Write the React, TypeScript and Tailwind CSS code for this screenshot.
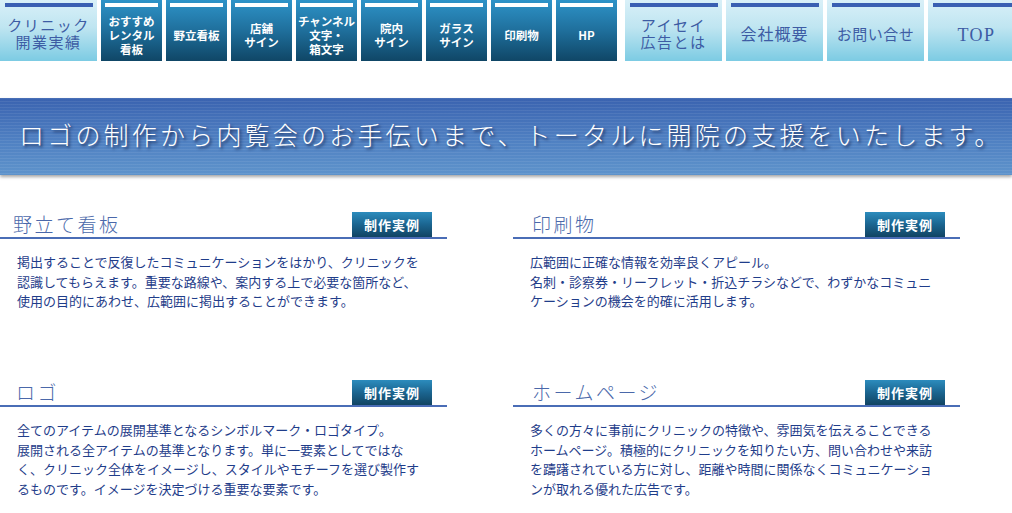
import React from "react";

const darkItems: string[][] = [
  ["おすすめ", "レンタル", "看板"],
  ["野立看板"],
  ["店舗", "サイン"],
  ["チャンネル", "文字・", "箱文字"],
  ["院内", "サイン"],
  ["ガラス", "サイン"],
  ["印刷物"],
  ["HP"],
];

const lightItems: { lines: string[]; size: string }[] = [
  { lines: ["アイセイ", "広告とは"], size: "text-[15px] leading-[17px] tracking-[1.5px]" },
  { lines: ["会社概要"], size: "text-[16px] leading-[18px] tracking-[1px]" },
  { lines: ["お問い合せ"], size: "text-[15px] leading-[18px] tracking-[0.5px]" },
  { lines: ["TOP"], size: "text-[18px] leading-[20px] tracking-[1.5px]" },
];

function LightItem({ lines, size }: { lines: string[]; size: string }) {
  return (
    <div className="relative h-[61px] w-[97px] shrink-0 bg-[linear-gradient(to_bottom,#d9f0f8_0%,#bfe5f1_45%,#7ccbe3_100%)]">
      <div className="absolute left-[5px] right-[4px] top-[3px] h-[4px] bg-[#3a5fb2]" />
      <div
        className={`flex h-full flex-col items-center justify-center pt-[9px] font-['Liberation_Serif','Noto_Sans_CJK_JP',serif] ${size} text-[#3d5ca4]`}
      >
        {lines.map((l) => (
          <span key={l} className="whitespace-nowrap">
            {l}
          </span>
        ))}
      </div>
    </div>
  );
}

function DarkItem({ lines }: { lines: string[] }) {
  return (
    <div className="relative h-[61px] w-[61px] shrink-0 bg-[linear-gradient(to_bottom,#2e93c8_0%,#1f6f9c_50%,#0f4666_100%)]">
      <div className="absolute left-[4px] right-[4px] top-[3px] h-[4px] bg-white" />
      <div className="flex h-full flex-col items-center justify-center pt-[8px] font-['Noto_Sans_CJK_JP',sans-serif] text-[11.5px] font-bold leading-[14px] text-white">
        {lines.map((l) => (
          <span key={l} className="whitespace-nowrap">
            {l}
          </span>
        ))}
      </div>
    </div>
  );
}

function Section({
  title,
  lines,
  titlePad,
}: {
  title: string;
  lines: string[];
  titlePad: string;
}) {
  return (
    <div className="h-[168px]">
      <div className="flex h-[28px] items-end justify-between border-b-2 border-[#4a6db6] pr-[15px]">
        <h2
          className={`${titlePad} pb-[2px] font-['Noto_Sans_CJK_JP',sans-serif] text-[19px] font-light leading-[22px] tracking-[2.5px] text-[#4a68aa]`}
        >
          {title}
        </h2>
        <div className="flex h-[25px] w-[80px] items-center justify-center bg-[linear-gradient(to_bottom,#2c8cbd_0%,#1b6590_50%,#114462_100%)] font-['Noto_Sans_CJK_JP',sans-serif] text-[13px] font-bold tracking-[1px] text-white">
          制作実例
        </div>
      </div>
      <div className="pl-[17px] pt-[13px] font-['Noto_Sans_CJK_JP',sans-serif] text-[13px] leading-[19.5px] text-[#1f3d8a]">
        {lines.map((l) => (
          <p key={l} className="whitespace-nowrap">
            {l}
          </p>
        ))}
      </div>
    </div>
  );
}

export default function App() {
  return (
    <div className="h-[513px] w-[1012px] overflow-hidden bg-white">
      {/* nav */}
      <nav className="flex h-[61px] items-start">
        <LightItem
          lines={["クリニック", "開業実績"]}
          size="text-[15px] leading-[17px] tracking-[1.5px]"
        />
        <div className="ml-[4px] flex gap-[4px]">
          {darkItems.map((lines) => (
            <DarkItem key={lines.join()} lines={lines} />
          ))}
        </div>
        <div className="ml-[8px] flex gap-[4px]">
          {lightItems.map((it) => (
            <LightItem key={it.lines.join()} lines={it.lines} size={it.size} />
          ))}
        </div>
      </nav>

      {/* banner */}
      <div className="mt-[37px] shadow-[0_2px_3px_rgba(0,0,0,0.35)]">
        <div className="relative h-[77px] bg-[linear-gradient(to_bottom,#3a63b0_0%,#4f80c2_55%,#5e93cb_100%)]">
          <div className="absolute inset-0 bg-[repeating-linear-gradient(to_bottom,rgba(255,255,255,0.07)_0px,rgba(255,255,255,0.07)_1px,transparent_1px,transparent_3px)]" />
          <div className="relative flex h-full items-center pl-[19px] pb-[4px] font-['Noto_Sans_CJK_JP',sans-serif] text-[25px] font-light tracking-[3.2px] whitespace-nowrap text-white [text-shadow:2px_2px_3px_rgba(10,20,60,0.75)]">
            ロゴの制作から内覧会のお手伝いまで、トータルに開院の支援をいたします。
          </div>
        </div>
      </div>

      {/* content */}
      <div className="mt-[36px] flex">
        <div className="w-[447px]">
          <Section
            title="野立て看板"
            titlePad="pl-[13px]"
            lines={[
              "掲出することで反復したコミュニケーションをはかり、クリニックを",
              "認識してもらえます。重要な路線や、案内する上で必要な箇所など、",
              "使用の目的にあわせ、広範囲に掲出することができます。",
            ]}
          />
          <Section
            title="ロゴ"
            titlePad="pl-[16px]"
            lines={[
              "全てのアイテムの展開基準となるシンボルマーク・ロゴタイプ。",
              "展開される全アイテムの基準となります。単に一要素としてではな",
              "く、クリニック全体をイメージし、スタイルやモチーフを選び製作す",
              "るものです。イメージを決定づける重要な要素です。",
            ]}
          />
        </div>
        <div className="ml-[66px] w-[447px]">
          <Section
            title="印刷物"
            titlePad="pl-[19px]"
            lines={[
              "広範囲に正確な情報を効率良くアピール。",
              "名刺・診察券・リーフレット・折込チラシなどで、わずかなコミュニ",
              "ケーションの機会を的確に活用します。",
            ]}
          />
          <Section
            title="ホームページ"
            titlePad="pl-[19px]"
            lines={[
              "多くの方々に事前にクリニックの特徴や、雰囲気を伝えることできる",
              "ホームページ。積極的にクリニックを知りたい方、問い合わせや来訪",
              "を躊躇されている方に対し、距離や時間に関係なくコミュニケーショ",
              "ンが取れる優れた広告です。",
            ]}
          />
        </div>
      </div>
    </div>
  );
}
